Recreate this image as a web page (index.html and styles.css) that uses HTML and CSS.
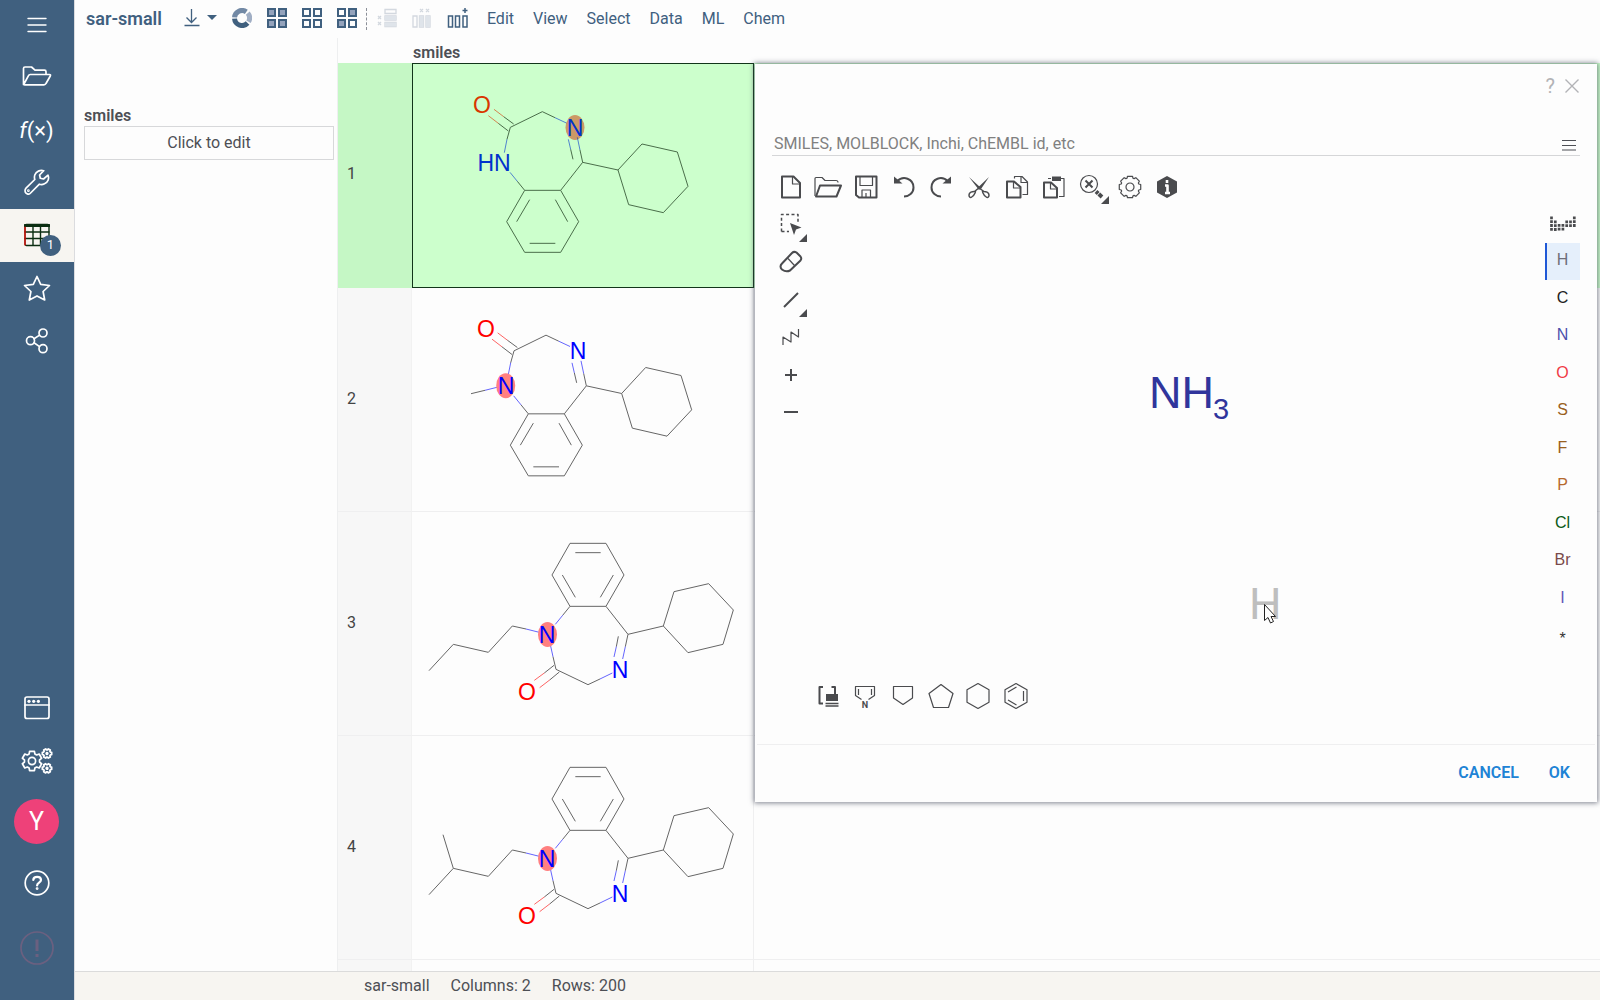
FILE: index.html
```html
<!DOCTYPE html>
<html lang="en">
<head>
<meta charset="utf-8">
<title>sar-small</title>
<link rel="stylesheet" href="styles.css">
</head>
<body>
<svg class="defs" aria-hidden="true">
  <defs>
    <path id="gear6" d="M-2.85-7.05-2.42-9.7 2.42-9.7 2.85-7.05 4.68-5.99 7.19-6.95 9.61-2.76 7.53-1.06 7.53 1.06 9.61 2.76 7.19 6.95 4.68 5.99 2.85 7.05 2.42 9.7-2.42 9.7-2.85 7.05-4.68 5.99-7.19 6.95-9.61 2.76-7.53 1.06-7.53-1.06-9.61-2.76-7.19-6.95-4.68-5.99Z"/>
    <!-- 1,4-benzodiazepine core, carbonyl at the top left -->
    <g id="core-up">
      <g class="bonds" transform="translate(-81 -14) scale(.33333)">
        <path class="c" d="M551 222 521 200M535 243 505 220M541 232 637 185 675 203M541 232 531 268M562 394 584 421 692 421 746 515 692 607 584 607 530 515 584 421M599 449 560 515M676 449 713 515M599 580H676M692 421 758 337 750 300M729 328 722 298M758 337 864 360 936 282 1042 306 1074 409 1000 488 896 464 864 360"/>
        <path class="o" d="M521 200 492 178M505 220 475 197"/>
        <path class="n" d="M675 203 709 219M531 268 523 308M562 394 540 367M750 300 742 262M722 298 715 268"/>
      </g>
    </g>
    <!-- the same core, carbonyl at the bottom left -->
    <g id="core-down">
      <g class="bonds" transform="translate(-81 -2) scale(.33333)">
        <path class="c" d="M698 316 720 289 828 289 882 195 828 100 720 100 666 195 720 289M736 128H812M697 195 736 262M850 195 811 262M828 289 894 373 886 410M865 379 859 410M894 373 1000 348 1032 245 1136 221 1210 300 1179 403 1074 428 1000 348M810 507 774 524 678 478 669 440M672 466 643 489M688 486 659 510M588 357 547 348 475 427 370 403 297 482"/>
        <path class="o" d="M643 489 613 511M659 510 629 533"/>
        <path class="n" d="M698 316 676 343M886 410 878 447M859 410 852 441M810 507 847 489M669 440 661 404M588 357 628 367"/>
      </g>
      <ellipse class="halo" cx="136.500" cy="122.500" rx="9.500" ry="12.500"/>
      <text class="nt" x="136" y="131">N</text>
      <text class="nt" x="209" y="166">N</text>
      <text class="ot" x="116" y="188">O</text>
    </g>
  </defs>
</svg>

<div class="app">
  <nav class="rail" aria-label="Main">
    <button class="rail-btn first" aria-label="Menu"><svg width="20" height="16" viewBox="0 0 20 16"><path d="M1 1.500H19M1 8H19M1 14.500H19" stroke-width="1.400"/></svg></button>
    <button class="rail-btn" aria-label="Open"><svg width="30" height="20" viewBox="0 0 30 20"><path d="M1.500 18.500V2.500Q1.500 1 3 1H9.500L13 4.200H22.500Q24 4.200 24 5.700V8.500M1.700 18.500 6.500 9.700Q7 8.500 8.200 8.500H27.500Q29 8.500 28.300 10L24 17.500Q23.400 18.800 22 18.800H2.800Q1.500 18.800 1.500 17.500"/></svg></button>
    <button class="rail-btn fx" aria-label="Functions"><i>f</i>(×)</button>
    <button class="rail-btn" aria-label="Tools"><svg width="26" height="26" viewBox="0 0 26 26"><path d="M24 6.200 19.500 10 16.300 9.200 15.600 6 19.700 1.700C16 .7 12.200 2.500 10.900 5.800 10.300 7.400 10.300 9 10.800 10.500L2 19.200C.7 20.600 .7 22.900 2 24.100 3.400 25.400 5.300 25.300 6.600 24L15.400 15.200C17 15.800 18.800 15.600 20.500 14.800 24 13.300 25.400 9.600 24 6.200Z"/><circle cx="4.400" cy="21.700" r=".5"/></svg></button>
    <button class="rail-btn active" aria-label="Tables"><svg width="26" height="24" viewBox="0 0 26 24"><rect x="1" y="1.500" width="24" height="21" rx="1.500"/><path d="M1 2.500H25" stroke-width="3"/><path d="M9 3V22M16.500 3V22M1 9H25M1 15.500H25"/><path class="edge" d="M1 4V22" stroke-width="1.200"/></svg><span class="badge">1</span></button>
    <button class="rail-btn" aria-label="Favorites"><svg width="28" height="27" viewBox="0 0 28 27"><path d="M14 1.500 17.700 9.300 26.500 10.500 20.100 16.500 21.700 25 14 20.900 6.300 25 7.900 16.500 1.500 10.500 10.300 9.300Z"/></svg></button>
    <button class="rail-btn" aria-label="Share"><svg width="24" height="26" viewBox="0 0 24 26"><circle cx="5.500" cy="12.700" r="4"/><circle cx="18" cy="5" r="4"/><circle cx="18" cy="20.700" r="4"/><path d="M9 10.700 14.600 7.100M9 14.800 14.600 18.600"/></svg></button>
    <span class="rail-gap"></span>
    <button class="rail-btn" aria-label="Windows"><svg width="26" height="24" viewBox="0 0 26 24"><rect x="1" y="1" width="24" height="21.500" rx="2"/><path d="M1 9H25"/><g class="dots"><circle cx="5" cy="5.300" r="1.600"/><circle cx="9.700" cy="5.300" r="1.600"/><circle cx="14.400" cy="5.300" r="1.600"/></g></svg></button>
    <button class="rail-btn" aria-label="Settings"><svg width="34" height="28" viewBox="0 0 34 28"><use href="#gear6" transform="translate(12 14)"/><circle cx="12" cy="14" r="3.600"/><g transform="translate(27 6.500) rotate(30) scale(.48)" stroke-width="3.600"><use href="#gear6"/><circle r="1.700"/></g><g transform="translate(27 21.300) rotate(30) scale(.48)" stroke-width="3.600"><use href="#gear6"/><circle r="1.700"/></g></svg></button>
    <button class="rail-btn user" aria-label="User"><span class="avatar">Y</span></button>
    <button class="rail-btn help" aria-label="Help"><svg width="26" height="26" viewBox="0 0 26 26"><circle cx="13" cy="13" r="11.800"/><path d="M9.300 10C9.500 5.800 17 5.800 17 10 17 12.600 13.100 12.700 13.100 15.500" stroke-width="2.200"/><circle cx="13.100" cy="18.600" r=".6"/></svg></button>
    <button class="rail-btn alert" aria-label="Errors"><svg width="34" height="34" viewBox="0 0 34 34"><circle cx="17" cy="17" r="16"/><path d="M17 8.500V20" stroke-width="3"/><path d="M17 23V26" stroke-width="3"/></svg></button>
  </nav>

  <div class="main">
    <header class="topbar">
      <h1 class="title">sar-small</h1>
      <button class="tool download" aria-label="Download"><svg width="34" height="20" viewBox="0 0 34 20"><path d="M7.500 1V14M2.500 9.500 7.500 14.500 12.500 9.500M.5 17.500H15.500"/><path class="fill" d="M23 7H33L28 12Z"/></svg></button>
      <button class="tool ring" aria-label="Refresh"><svg width="20" height="20" viewBox="-10 -10 20 20"><path class="mid" d="M-7.470-.650A7.500 7.500 0 0 1 4.300-6.140"/><path class="pale" d="M5.750-4.820A7.500 7.500 0 0 1 6.500 3.750"/><path d="M5.570 5.020A7.500 7.500 0 0 1-7.470 .650"/></svg></button>
      <button class="tool" aria-label="Select all"><svg width="20" height="20" viewBox="0 0 20 20"><g class="sq"><path class="on" d="M1 1H8V8H1Z"/><path class="on" d="M12 1H19V8H12Z"/><path class="on" d="M1 12H8V19H1Z"/><path class="on" d="M12 12H19V19H12Z"/></g></svg></button>
      <button class="tool" aria-label="Select none"><svg width="20" height="20" viewBox="0 0 20 20"><path class="sq" d="M1 1H8V8H1ZM12 1H19V8H12ZM1 12H8V19H1ZM12 12H19V19H12Z"/></svg></button>
      <button class="tool" aria-label="Invert selection"><svg width="20" height="20" viewBox="0 0 20 20"><g class="sq"><path d="M1 1H8V8H1Z"/><path class="on" d="M12 1H19V8H12Z"/><path class="on" d="M1 12H8V19H1Z"/><path d="M12 12H19V19H12Z"/></g></svg></button>
      <span class="sep"></span>
      <button class="tool off" aria-label="Delete rows" disabled><svg width="20" height="20" viewBox="0 0 20 20"><path d="M8 1.500H19V5.500H8ZM8 8H19V12H8ZM8 14.500H19V18.500H8Z"/><path class="fill" d="M8 8H19V12H8ZM8 14.500H19V18.500H8Z"/><path d="M1 8 4 11M4 8 1 11M1 14 4 17M4 14 1 17"/></svg></button>
      <button class="tool off" aria-label="Delete columns" disabled><svg width="20" height="20" viewBox="0 0 20 20"><path d="M1 8H5V19H1ZM7.500 8H11.500V19H7.500ZM14 8H18V19H14Z"/><path class="fill" d="M7.500 8H11.500V19H7.500ZM14 8H18V19H14Z"/><path d="M8 1 11 4M11 1 8 4M14 1 17 4M17 1 14 4"/></svg></button>
      <button class="tool" aria-label="Add column"><svg width="22" height="20" viewBox="0 0 22 20"><path d="M1.500 8H5.500V19H1.500ZM8.500 8H12.500V19H8.500ZM16 8H20V19H16ZM18 0V5M15.500 2.500H20.500" stroke-width="1.500"/></svg></button>
      <nav class="menu" aria-label="Table">
        <button>Edit</button><button>View</button><button>Select</button><button>Data</button><button>ML</button><button>Chem</button>
      </nav>
    </header>

    <div class="work">
      <aside class="filters">
        <h2 class="filter-name">smiles</h2>
        <button class="edit">Click to edit</button>
      </aside>

      <div class="grid-wrap">
        <table class="grid">
          <colgroup><col class="col-num"><col class="col-mol"><col></colgroup>
          <thead><tr><th></th><th class="name" scope="col">smiles</th><th></th></tr></thead>
          <tbody>
            <tr class="current"><th scope="row">1</th><td><svg class="mol" viewBox="1 0 342 224"><ellipse class="halo" cx="164" cy="63.500" rx="9.500" ry="12.500"/><use href="#core-up"/><text class="ot" x="71" y="49">O</text><text class="nt" x="164" y="72">N</text><text class="nt" x="83" y="107">HN</text></svg></td><td></td></tr>
            <tr><th scope="row">2</th><td><svg class="mol" viewBox="1 0 342 224"><use href="#core-up" x="3.670" y="-.5"/><g class="bonds"><path class="c" d="M60 105.700 74 102.300"/><path class="n" d="M74 102.300 86 99.300"/></g><ellipse class="halo" cx="94.700" cy="97.700" rx="9.500" ry="12.500"/><text class="ot" x="75" y="49">O</text><text class="nt" x="167" y="71">N</text><text class="nt" x="95" y="106">N</text></svg></td><td></td></tr>
            <tr><th scope="row">3</th><td><svg class="mol" viewBox="1 0 342 224"><use href="#core-down"/></svg></td><td></td></tr>
            <tr><th scope="row">4</th><td><svg class="mol" viewBox="1 0 342 224"><use href="#core-down"/><g class="bonds"><path class="c" d="M42.300 132.300 32 98.700"/></g></svg></td><td></td></tr>
            <tr><th scope="row"></th><td></td><td></td></tr>
          </tbody>
        </table>
      </div>

      <section class="dialog" role="dialog" aria-label="Edit molecule">
        <div class="dlg-head">
          <button aria-label="Help">?</button>
          <button aria-label="Close"><svg width="14" height="14" viewBox="0 0 14 14"><path d="M.5 .5 13.500 13.500M13.500 .5 .5 13.500"/></svg></button>
        </div>
        <div class="query">
          <input type="text" aria-label="Molecule" placeholder="SMILES, MOLBLOCK, Inchi, ChEMBL id, etc">
          <button aria-label="Options"><svg width="14" height="12" viewBox="0 0 14 12"><path d="M0 1.500H14M0 6.500H14M0 11H14"/></svg></button>
        </div>
        <div class="sketcher">
          <div class="tools-top">
            <button aria-label="New"><svg viewBox="0 0 28 28"><path class="b" d="M5 3.500H16.500L23 10V24.500H5Z"/><path d="M15.500 4V11H22.500"/></svg></button>
            <button aria-label="Open file"><svg viewBox="0 0 28 28"><path d="M1 23V5.500Q1 4.500 2 4.500H8L11 7.500H22Q24 7.500 24 9.500"/><path class="b" d="M6 12.500H27L22.500 23.500H2Z"/></svg></button>
            <button aria-label="Save"><svg viewBox="0 0 28 28"><path class="b" d="M4 3.500H24.500V24.500H7L4 22Z"/><path d="M8 4V12.500H20.500V4M10 24V17H18.500V24M14 20V24"/></svg></button>
            <button aria-label="Undo"><svg viewBox="0 0 28 28"><path class="b" d="M7 8.500C13 2 23.500 5.500 23.500 14.500 23.500 20 19 23.500 14 23.500"/><path class="f" d="M4 3.500 12.500 10.500H4Z"/></svg></button>
            <button aria-label="Redo"><svg viewBox="0 0 28 28"><path class="b" d="M21 8.500C15 2 4.500 5.500 4.500 14.500 4.500 20 9 23.500 14 23.500"/><path class="f" d="M24 3.500V10.500H15.500Z"/></svg></button>
            <button aria-label="Cut"><svg viewBox="0 0 28 28"><path class="f" d="M4 4 16 15 14 17ZM24 4 16 16 13.500 14Z"/><path d="M15 14 9.500 18.500M14 15 19 18.500M10 20C8 25 4 26 4 22 4 19.500 7 18 10.500 18.500ZM18 20C20 25 24 26 24 22 24 19.500 21 18 17.500 18.500Z" stroke-width="1.500"/></svg></button>
            <button aria-label="Copy"><svg viewBox="0 0 28 28"><path class="b" d="M4 8.500H11L17.500 14V24.500H4Z"/><path d="M10.500 9V15H17M11.500 5.500V3.500H19L24.500 9V21.500H19.500M18 4V9.500H24"/></svg></button>
            <button aria-label="Paste"><svg viewBox="0 0 28 28"><path class="b" d="M4 9.500H11L17 15V24.500H4Z"/><path d="M10.500 10V16H16.500M8 5.500H11M21 5.500H24V23.500H19"/><path class="f" d="M12 3.500H21V8H12Z"/></svg></button>
            <button aria-label="Clean up"><svg viewBox="0 0 28 28"><circle cx="11" cy="11" r="8.500"/><path class="b" d="M7.500 7.500 14.500 14.500M14.500 7.500 7.500 14.500"/><path d="M18 18.500 24 24" stroke-width="4" stroke-dasharray="3 .8 8"/></svg><i class="more"></i></button>
            <button aria-label="Settings"><svg viewBox="-14 -14 28 28"><path d="M-2.470-10.720 2.470-10.720 3.030-8.790 4.080-8.360 5.830-9.330 9.330-5.830 8.360-4.080 8.790-3.030 10.720-2.470 10.720 2.470 8.790 3.030 8.360 4.080 9.330 5.830 5.830 9.330 4.080 8.360 3.030 8.790 2.470 10.720-2.470 10.720-3.030 8.790-4.080 8.360-5.830 9.330-9.330 5.830-8.360 4.080-8.790 3.030-10.720 2.470-10.720-2.470-8.790-3.030-8.360-4.080-9.330-5.830-5.830-9.330-4.080-8.360-3.030-8.790Z"/><circle r="4"/></svg></button>
            <button aria-label="About"><svg viewBox="0 0 28 28"><path class="f" d="M14 3 24 8.500V19.500L14 25 4 19.500V8.500Z"/><path d="M14 7V10M12 12.500H14.500V20M12 20H17" stroke="#fff" stroke-width="2.600"/></svg></button>
          </div>
          <div class="tools-left">
            <button aria-label="Select"><svg viewBox="0 0 28 28"><path d="M4.500 20.500V3.500H21V13M4.500 20.500H12" stroke-dasharray="3 2.400" stroke-width="1.500"/><path class="f" d="M13 12 24.500 16.500 19 18.500 17 24Z"/></svg><i class="more"></i></button>
            <button aria-label="Erase"><svg viewBox="0 0 28 28"><path class="b" d="M5 15.500 15 5Q17 3 19.500 4.500L23.500 8.500Q25 10.500 23.500 12.500L13 22.500Q9 24.500 5 21.500 2 18.500 5 15.500Z"/><path d="M11 10.500 17.500 17.500"/></svg></button>
            <button aria-label="Bond"><svg viewBox="0 0 28 28"><path class="b" d="M7 21 21 7"/></svg><i class="more"></i></button>
            <button aria-label="Chain"><svg viewBox="0 0 28 28"><path d="M6 22V14L14 19V9L21.500 14V6"/></svg></button>
            <button aria-label="Charge plus"><svg viewBox="0 0 28 28"><path class="b" d="M8 14H20M14 8V20"/></svg></button>
            <button aria-label="Charge minus"><svg viewBox="0 0 28 28"><path class="b" d="M7 14H21"/></svg></button>
          </div>
          <svg class="canvas" aria-label="Structure canvas">
            <text class="atom" x="340" y="202">NH</text>
            <text class="atom small" x="404" y="213">3</text>
            <text class="atom ghost" x="440" y="413">H</text>
            <path class="pointer" d="M455.500 398.500V414.500L459 411.500 461.500 417 464.500 415.500 462 410.500H466.500Z"/>
          </svg>
          <div class="atoms">
            <button aria-label="Periodic table"><svg viewBox="0 0 28 28"><path d="M2.500 7.500V22M6.300 11.500V22M10.100 15V22M13.900 15V22M17.700 11.500V18M21.500 11.500V18M25.300 7.500V18" stroke-width="2.700" stroke-dasharray="2.800 1"/></svg></button>
            <button class="picked">H</button>
            <button class="el-c">C</button>
            <button class="el-n">N</button>
            <button class="el-o">O</button>
            <button class="el-s">S</button>
            <button class="el-s">F</button>
            <button class="el-p">P</button>
            <button class="el-cl">Cl</button>
            <button class="el-br">Br</button>
            <button class="el-i">I</button>
            <button class="el-any">*</button>
          </div>
          <div class="tools-bottom">
            <button aria-label="Templates"><svg viewBox="0 0 28 28"><path class="b" d="M9 5H5.500V21.500H9M17.500 5H21V12"/><path class="f" d="M12 12H24V19H12Z"/><path d="M11.500 21.500H24.500M11.500 24H24.500" stroke-width="1.600"/></svg></button>
            <button aria-label="Pyrrole"><svg viewBox="0 0 28 28"><path d="M10.500 17.500 4.500 13.500V4.500H23.500V13.500L17.500 17.500M7.500 7V13M20.500 7V13"/><text class="ico-n" x="14" y="26">N</text></svg></button>
            <button aria-label="Cyclopentadiene"><svg viewBox="0 0 28 28"><path d="M4.500 4.500H23.500V16L14 22.500 4.500 16Z"/></svg></button>
            <button aria-label="Cyclopentane"><svg viewBox="0 0 28 28"><path d="M14 2.500 26 11.500 21.500 25.500H6.500L2 11.500Z"/></svg></button>
            <button aria-label="Cyclohexane"><svg viewBox="0 0 28 28"><path d="M14 1.500 25 7.800V20.200L14 26.500 3 20.200V7.800Z"/></svg></button>
            <button aria-label="Benzene"><svg viewBox="0 0 28 28"><path d="M14 1.500 25 7.800V20.200L14 26.500 3 20.200V7.800ZM21.500 9V19M6 10 14.500 5M6 18 14.500 23"/></svg></button>
          </div>
        </div>
        <footer class="dlg-foot">
          <button>CANCEL</button>
          <button>OK</button>
        </footer>
      </section>
    </div>

    <footer class="status"><span>sar-small</span><span>Columns: 2</span><span>Rows: 200</span></footer>
  </div>
</div>
</body>
</html>
```
FILE: styles.css
```css
* { box-sizing: border-box; }

body {
  margin: 0;
  font: 16px/20px Roboto, sans-serif;
  color: #4d4f55;
  background: #fdfdfd;
}

button {
  padding: 0;
  border: 0;
  background: none;
  color: inherit;
  font: inherit;
}

svg { fill: none; stroke: currentColor; }
svg text { stroke: none; fill: currentColor; }
.defs { position: absolute; width: 0; height: 0; }

.app { display: flex; height: 100vh; }

/* Left rail */
.rail {
  flex: 0 0 74px;
  display: flex;
  flex-direction: column;
  padding-bottom: 15px;
  background: #40607f;
  color: #fff;
}
.rail-btn {
  position: relative;
  flex: 0 0 53px;
  display: flex;
  align-items: center;
  justify-content: center;
  padding: 0 1px 1px 0;
}
.rail-btn svg { stroke-width: 1.7; stroke-linecap: round; stroke-linejoin: round; }
.rail-btn.first { flex-basis: 50px; }
.rail-btn.fx { padding-top: 3px; font-size: 22px; }
.rail-btn.active { background: #f7f5f1; color: #0b2e12; }
.rail-btn.active svg { stroke-width: 1.4; }
.edge { stroke: #ff0000; }
.rail-gap { flex: 1; }
.rail-btn.user { flex-basis: 67px; padding-bottom: 0; }
.rail-btn.help { flex-basis: 56px; padding-bottom: 0; }
.rail-btn.alert { flex-basis: 74px; color: #6b6080; }
.rail-btn.alert svg { stroke-linecap: butt; }
.dots { fill: #fff; stroke: none; }
.badge {
  position: absolute;
  left: 40px;
  top: 26px;
  width: 21px;
  height: 21px;
  border-radius: 50%;
  background: #40607f;
  color: #fff;
  font-size: 13px;
  line-height: 20px;
}
.avatar {
  width: 45px;
  height: 45px;
  border-radius: 50%;
  background: #ee4179;
  font-size: 25px;
  line-height: 46px;
}

/* Main column */
.main {
  flex: 1;
  min-width: 0;
  display: flex;
  flex-direction: column;
  border-left: 1px solid #dbdcdf;
}

.topbar {
  flex: 0 0 38px;
  display: flex;
  align-items: center;
  padding: 0 11px;
  color: #40607f;
}
.title { margin: 0 22px 0 0; font-size: 18px; font-weight: 600; line-height: 20px; }
.tool { display: flex; padding-bottom: 2px; margin-right: 15px; }
.tool.download { margin-right: 14px; }
.tool svg { stroke-width: 1.3; }
.tool.ring svg { stroke-width: 5; }
.tool .fill { fill: currentColor; stroke: none; }
.mid { stroke: #7289a5; }
.pale { stroke: #a0aec4; }
.sq { stroke-width: 2; }
.on { fill: #94a3bc; }
.tool.off { color: #d3d8df; }
.tool.off .fill { fill: #dfe4ea; }
.sep { height: 22px; margin: 0 10px 0 -6px; border-left: 1px dashed #8b8f98; }
.menu { display: flex; gap: 19px; margin-left: 3px; }

.work {
  position: relative;
  flex: 1;
  min-height: 0;
  display: flex;
}

.filters {
  flex: 0 0 263px;
  padding: 68px 3px 0 9px;
  border-right: 1px solid #eeeff0;
}
.filter-name { margin: 0; font-size: 16px; font-weight: 600; line-height: 20px; }
.edit { width: 100%; height: 34px; border: 1px solid #d7d8da; }

/* Data grid */
.grid-wrap { flex: 1; min-width: 0; overflow: hidden; }
.grid { width: 100%; table-layout: fixed; border-collapse: separate; border-spacing: 0; }
.col-num { width: 74px; }
.col-mol { width: 342px; }
.grid thead th { height: 25px; padding: 5px 0 0; }
.grid .name { padding-left: 1px; text-align: left; font-weight: 600; }
.grid tbody th {
  height: 224px;
  padding: 0 0 2px 9px;
  text-align: left;
  font-weight: 400;
  color: #444;
  background: #f7f7f7;
  border-right: 1px solid #f2f2f2;
}
.grid tbody th, .grid td { border-bottom: 1px solid #efeff0; }
.grid td { padding: 0; vertical-align: bottom; }
.grid td:nth-child(2) { border-right: 1px solid #efeff0; }
.grid .current th { height: 225px; background: #c5f7c5; border-color: #c5f7c5; }
.grid .current td { background: #ccffcc; border-color: #ccffcc; }
.grid .current td:nth-child(2) { outline: 1px solid #12351a; outline-offset: -1px; }

.mol {
  display: block;
  width: 342px;
  height: 224px;
  margin-bottom: -1px;
  --c: #666;
  --o: #ff0000;
  --n: #0000ff;
  --halo: #ff8080;
}
.current .mol { --c: #4a6e4a; --o: #d93600; --n: #0033cc; --halo: #cc9966; }
.bonds { stroke-width: 1; }
.bonds path { vector-effect: non-scaling-stroke; }
.c { stroke: var(--c); }
.o { stroke: var(--o); opacity: .6; }
.n { stroke: var(--n); opacity: .6; }
.halo { fill: var(--halo); stroke: none; }
.mol text, .nt, .ot { font: 23px "Liberation Sans", sans-serif; text-anchor: middle; }
svg .nt { fill: var(--n); }
svg .ot { fill: var(--o); }

/* Sketcher dialog */
.dialog {
  position: absolute;
  top: 26px;
  right: 3px;
  width: calc(100% - 683px);
  display: flex;
  flex-direction: column;
  background: #fdfdfd;
  box-shadow: 0 0 5px 1px rgba(60, 66, 84, .65);
}
.dlg-head {
  height: 58px;
  display: flex;
  justify-content: flex-end;
  gap: 10px;
  padding: 12px 18px 0 0;
  color: #b2b3b6;
}
.dlg-head button { height: 20px; display: flex; align-items: center; font-size: 20px; }
.dlg-head svg { stroke-width: 1.4; }
.query {
  display: flex;
  align-items: center;
  justify-content: space-between;
  height: 34px;
  margin: 0 17px;
  padding: 10px 4px 0 0;
  border-bottom: 1px solid #d5d6d8;
}
.query input {
  flex: 1;
  padding: 0 2px;
  border: 0;
  outline: 0;
  background: none;
  font: inherit;
}
.query input::placeholder { color: #808080; opacity: 1; }
.query button { display: flex; padding-top: 2px; }

.sketcher {
  display: grid;
  grid-template: 38px 454px 76px / 37px 1fr 35px;
  grid-template-areas: "top top top" "left canvas atoms" "bottom bottom bottom";
  margin: 12px 17px 0;
  padding-bottom: 8px;
  color: #4a4b4e;
}
.sketcher button {
  position: relative;
  display: flex;
  align-items: center;
  justify-content: center;
}
.sketcher button svg { width: 28px; height: 28px; stroke-width: 1.2; stroke-linejoin: round; }
.sketcher .b { stroke-width: 2; }
.sketcher .f { fill: currentColor; stroke: none; }
.tools-top { grid-area: top; display: grid; grid-template-columns: repeat(11, 1fr); width: 414px; }
.tools-left { grid-area: left; display: grid; grid-template-rows: repeat(6, 1fr); height: 225px; }
.tools-bottom {
  grid-area: bottom;
  display: grid;
  grid-template-columns: repeat(6, 1fr);
  align-self: start;
  width: 226px;
  height: 38px;
  margin: 17px 0 0 37px;
}
.more {
  position: absolute;
  right: 2px;
  bottom: 2px;
  border-left: 8px solid transparent;
  border-bottom: 8px solid #4a4b4e;
}
.ico-n { font: 700 9px Roboto, sans-serif; text-anchor: middle; }
.canvas { grid-area: canvas; width: 100%; height: 100%; }
.atom { font: 45px "Liberation Sans", sans-serif; }
svg .atom { fill: #30359c; }
.atom.small { font-size: 29px; }
svg .atom.ghost { fill: #bebebe; }
.pointer { fill: #fff; stroke: #222; }
.atoms {
  grid-area: atoms;
  display: grid;
  grid-template-rows: repeat(12, 1fr);
  height: 450px;
  margin-top: -1px;
  font: 16px/20px "Liberation Sans", sans-serif;
}
.atoms button { padding-bottom: 2px; }
.atoms .picked {
  padding-right: 2px;
  border-left: 2px solid #1f58d6;
  background: #e5effb;
  color: #6e6e78;
}
.el-c { color: #222; }
.el-n { color: #4a50ab; }
.el-o { color: #f03a46; }
.el-s { color: #996020; }
.el-p { color: #b5692d; }
.el-cl { color: #0c5a18; }
.el-br { color: #7a4a4a; }
.el-i { color: #6258b8; }
.atoms .el-any { padding-top: 7px; color: #333; }

.dlg-foot {
  display: flex;
  justify-content: flex-end;
  gap: 30px;
  height: 58px;
  margin: 0 2px;
  padding: 0 25px 2px 0;
  border-top: 1px solid #efeff0;
  color: #2083d5;
  font-weight: 600;
}

.status {
  flex: 0 0 29px;
  display: flex;
  align-items: center;
  gap: 21px;
  padding-left: 289px;
  border-top: 1px solid #dbdbdb;
  background: #f7f5f1;
}
```
